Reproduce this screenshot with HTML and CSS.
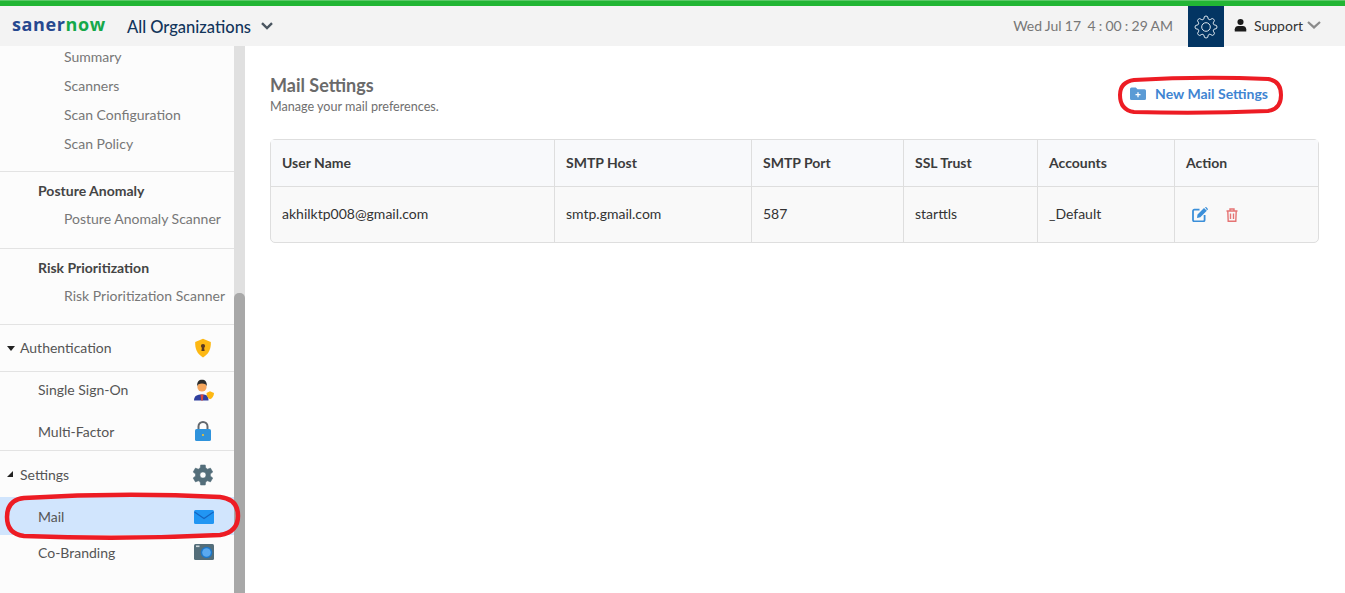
FILE: index.html
```html
<!DOCTYPE html>
<html lang="en">
<head>
<meta charset="utf-8">
<title>Mail Settings</title>
<link rel="stylesheet" href="styles.css">
</head>
<body>
<div class="topline"></div>
<header class="header">
  <div class="logo">saner<span class="logo-now">now</span></div>
  <div class="org">All Organizations</div>
  <svg class="org-chev" viewBox="0 0 12 8"><path d="M1 1.200 6 6l5-4.800" fill="none" stroke="#4a5560" stroke-width="2.400"/></svg>
  <div class="clock">Wed Jul 17&nbsp; 4 : 00 : 29 AM</div>
  <div class="gear-box">
    <svg viewBox="0 0 24 24" width="24" height="24" fill="none" stroke="#dfe8ef" stroke-width="1" stroke-linejoin="round"><circle cx="12" cy="12" r="4.300"/><path d="M19.4 15a1.65 1.65 0 0 0 .33 1.82l.06.06a2 2 0 0 1 0 2.83 2 2 0 0 1-2.83 0l-.06-.06a1.65 1.65 0 0 0-1.82-.33 1.65 1.65 0 0 0-1 1.51V21a2 2 0 0 1-2 2 2 2 0 0 1-2-2v-.09A1.65 1.65 0 0 0 9 19.4a1.65 1.65 0 0 0-1.82.33l-.06.06a2 2 0 0 1-2.83 0 2 2 0 0 1 0-2.83l.06-.06a1.65 1.65 0 0 0 .33-1.82 1.65 1.65 0 0 0-1.51-1H3a2 2 0 0 1-2-2 2 2 0 0 1 2-2h.09A1.65 1.65 0 0 0 4.6 9a1.65 1.65 0 0 0-.33-1.82l-.06-.06a2 2 0 0 1 0-2.83 2 2 0 0 1 2.83 0l.06.06a1.65 1.65 0 0 0 1.82.33H9a1.65 1.65 0 0 0 1-1.51V3a2 2 0 0 1 2-2 2 2 0 0 1 2 2v.09a1.65 1.65 0 0 0 1 1.51 1.65 1.65 0 0 0 1.82-.33l.06-.06a2 2 0 0 1 2.83 0 2 2 0 0 1 0 2.83l-.06.06a1.65 1.65 0 0 0-.33 1.82V9a1.65 1.65 0 0 0 1.51 1H21a2 2 0 0 1 2 2 2 2 0 0 1-2 2h-.09a1.65 1.65 0 0 0-1.51 1z"/></svg>
  </div>
  <div class="user">
    <svg viewBox="0 0 14 14" width="13" height="14"><circle cx="7" cy="3.800" r="3.300" fill="#1b1b1b"/><path d="M.8 14v-2.400C.8 9.200 2.800 8 4.400 8h5.200c1.600 0 3.600 1.200 3.600 3.600V14z" fill="#1b1b1b"/></svg>
    <span class="user-name">Support</span>
    <svg class="user-chev" viewBox="0 0 14 8"><path d="M1 1l6 5.400L13 1" fill="none" stroke="#8b8b8b" stroke-width="2.200"/></svg>
  </div>
</header>

<div class="body-row">
  <aside class="side">
    <nav class="side-nav">
      <div class="group first">
        <div class="sub">Summary</div>
        <div class="sub">Scanners</div>
        <div class="sub">Scan Configuration</div>
        <div class="sub">Scan Policy</div>
      </div>
      <div class="group">
        <div class="grp-title">Posture Anomaly</div>
        <div class="sub">Posture Anomaly Scanner</div>
      </div>
      <div class="group group-risk">
        <div class="grp-title">Risk Prioritization</div>
        <div class="sub">Risk Prioritization Scanner</div>
      </div>
      <div class="sec sec-auth">
        <span class="caret"></span><span class="sec-label">Authentication</span>
        <svg class="ico ico-narrow" viewBox="0 0 18 20" width="18" height="20"><path d="M9 .8 16.800 4c.3 7-2 12-7.800 15.400C3.200 16 .9 11 1.200 4z" fill="#fdb813"/><circle cx="9" cy="8" r="2.100" fill="#5b3a21"/><path d="M8 9h2l.6 4H7.400z" fill="#5b3a21"/></svg>
      </div>
      <div class="item item-sso">
        <span>Single Sign-On</span>
        <svg class="ico" viewBox="0 0 20 22" width="20" height="22"><path d="M0 21.500c0-4.500 3-6 8-6s6.500 1.500 6.500 6z" fill="#2f3f9e"/><path d="M6.500 15.500h3l-.7 6H7.200z" fill="#d9483b"/><circle cx="8" cy="8" r="4.600" fill="#f6a65c"/><path d="M3.200 7.500C2.800 2.500 5 .8 8 .8s5.200 1.700 4.800 6.700c-.6-2.300-1.800-3-4.800-3s-4.200.7-4.800 3z" fill="#2c2c2c"/><path d="M12.500 14l3.500-1.800 4 1.800c0 3.300-2 5.500-4 6.200-1.600-.7-3.500-2.500-3.500-6.200z" fill="#fdb813"/></svg>
      </div>
      <div class="item item-mfa">
        <span>Multi-Factor</span>
        <svg class="ico ico-narrow" viewBox="0 0 18 20" width="18" height="20"><path d="M4.500 9V5.500a4.500 4.500 0 0 1 9 0V9" fill="none" stroke="#62686e" stroke-width="2"/><rect x="1" y="8" width="16" height="12" rx="1.600" fill="#2f93dc"/><circle cx="9" cy="14" r="1.100" fill="#f2c230"/></svg>
      </div>
      <div class="sec sec-settings">
        <span class="caret caret-open"></span><span class="sec-label">Settings</span>
        <svg class="ico" viewBox="3 2 19.500 20" width="22" height="22"><path fill="#546e7a" stroke="#546e7a" stroke-width=".5" d="M19.400 13a7.500 7.500 0 0 0 0-2l2.200-1.700-2.100-3.600-2.600 1a7.500 7.500 0 0 0-1.700-1L14.800 2.900h-4.200l-.4 2.800a7.500 7.500 0 0 0-1.700 1l-2.600-1-2.100 3.600L6 11a7.500 7.500 0 0 0 0 2l-2.200 1.700 2.100 3.600 2.600-1a7.500 7.500 0 0 0 1.700 1l.4 2.800h4.200l.4-2.800a7.500 7.500 0 0 0 1.700-1l2.600 1 2.100-3.600zM12.700 14.800a2.800 2.800 0 1 1 0-5.600 2.800 2.800 0 0 1 0 5.600z"/></svg>
      </div>
      <div class="item item-active">
        <span>Mail</span>
        <svg class="ico" viewBox="0 0 20 14" width="20" height="14"><rect width="20" height="14" rx="1.500" fill="#2196f3"/><path d="M.5 2 10 8.500 19.500 2" fill="none" stroke="#1565c0" stroke-width="1.200"/></svg>
      </div>
      <div class="item item-brand">
        <span>Co-Branding</span>
        <svg class="ico" viewBox="0 0 20 16" width="20" height="16"><rect width="20" height="16" rx="1.500" fill="#546e7a"/><rect x="2" y="1.500" width="3.500" height="1.600" fill="#cfd8dc"/><circle cx="12.500" cy="8.500" r="5.800" fill="#1e78c8"/><circle cx="12.500" cy="8.500" r="4.300" fill="#5aa9f0"/></svg>
      </div>
    </nav>
    <div class="scrollbar"><div class="thumb"></div></div>
  </aside>

  <main class="main">
    <div class="page-head">
      <div>
        <h1 class="page-title">Mail Settings</h1>
        <p class="page-sub">Manage your mail preferences.</p>
      </div>
      <a class="new-btn">
        <svg viewBox="0 0 16 13" width="16" height="13"><path d="M0 2a1.500 1.500 0 0 1 1.500-1.500h4.300L7.500 2.300h7A1.500 1.500 0 0 1 16 3.800v7.700A1.500 1.500 0 0 1 14.500 13h-13A1.500 1.500 0 0 1 0 11.500z" fill="#5b9bd5"/><path d="M8 5.200v5M5.500 7.700h5" stroke="#fff" stroke-width="1.300"/></svg>
        <span>New Mail Settings</span>
      </a>
    </div>
    <table class="tbl">
      <colgroup>
        <col class="c1"><col class="c2"><col class="c3"><col class="c4"><col class="c5"><col>
      </colgroup>
      <thead>
        <tr><th>User Name</th><th>SMTP Host</th><th>SMTP Port</th><th>SSL Trust</th><th>Accounts</th><th>Action</th></tr>
      </thead>
      <tbody>
        <tr>
          <td>akhilktp008@gmail.com</td><td>smtp.gmail.com</td><td>587</td><td>starttls</td><td>_Default</td>
          <td class="actions">
            <svg viewBox="0 0 16 15" width="16" height="15"><path d="M7.500 2.700H2.300A1.300 1.300 0 0 0 1 4v9a1.300 1.300 0 0 0 1.300 1.300h9A1.300 1.300 0 0 0 12.600 13V8" fill="none" stroke="#3b8fd9" stroke-width="1.800"/><path d="M5.500 7.500 12 1l2.800 2.800-6.500 6.500-3.300.6zM13 0l.8-.3 2.200 2.200-.3.800-.7.500L13 .1z" fill="#3b8fd9"/></svg>
            <svg viewBox="0 0 12 14" width="12" height="14"><path d="M.5 3h11M4 3V1h4v2M1.800 3l.4 10.300h7.600L10.200 3M4.500 5.500v5.500M7.500 5.500v5.500" fill="none" stroke="#e57373" stroke-width="1.400"/></svg>
          </td>
        </tr>
      </tbody>
    </table>
  </main>
</div>

<svg class="mark mark-new" viewBox="0 0 170 44" width="170" height="44"><path d="M18 7Q85 3 152 6 165 8 165 22 165 36 152 38 85 41 18 39 4 37 4 22 4 9 18 7Z" fill="none" stroke="#ed1c24" stroke-width="4"/></svg>
<svg class="mark mark-mail" viewBox="0 0 240 50" width="240" height="50"><path d="M20 7Q118 1 216 6 234 8 234 25 234 41 216 44 118 49 20 45 3 43 3 26 3 9 20 7Z" fill="none" stroke="#ed1c24" stroke-width="4.500"/></svg>
</body>
</html>
```

FILE: styles.css
```css
* { box-sizing: border-box; }
html, body { margin: 0; padding: 0; height: 100%; }
body {
  position: relative;
  height: 593px;
  overflow: hidden;
  background: #fff;
  font-family: Lato, "Liberation Sans", sans-serif;
  font-size: 14px;
  color: #333;
  display: flex;
  flex-direction: column;
}
.topline { height: 6px; flex: none; background: #22b534; border-top: 1px solid #5cc868; }
.header {
  height: 40px;
  flex: none;
  display: flex;
  align-items: center;
  background: #f3f3f3;
  padding-left: 12px;
}
.logo { font-family: "Open Sans", "DejaVu Sans", sans-serif; font-weight: 700; font-size: 18px; letter-spacing: .6px; color: #26488f; width: 115px; margin-top: -4px; }
.logo-now { color: #15a84a; }
.org { font-size: 16.500px; font-weight: 500; color: #12355b; margin-top: 1px; }
.org-chev { width: 12px; height: 8px; margin-left: 10px; }
.clock { margin-left: auto; font-size: 14px; word-spacing: -.4px; color: #777; margin-right: 15px; margin-bottom: 2px; }
.gear-box { width: 36px; height: 41px; align-self: flex-start; background: #033563; display: flex; align-items: center; justify-content: center; }
.user { width: 121px; display: flex; align-items: center; padding-left: 10px; margin-bottom: 2px; }
.user-name { font-size: 14px; color: #333; margin-left: 7px; }
.user-chev { width: 14px; height: 8px; margin-left: 4px; }

.body-row { flex: 1; display: flex; min-height: 0; }
.side { width: 245px; flex: none; display: flex; background: #fcfcfc; overflow: hidden; }
.side-nav { width: 234px; flex: none; }
.scrollbar { width: 11px; background: #e0e0e0; display: flex; flex-direction: column; justify-content: flex-end; }
.thumb { height: 300px; background: #a8a8a8; border-radius: 5px 5px 0 0; }

.group { border-bottom: 1px solid #e3e3e3; height: 77px; padding-top: 5px; }
.group.first { height: 130px; padding-top: 0; margin-top: -4px; }
.group-risk { height: 76px; }
.sub { height: 29px; line-height: 29px; padding-left: 64px; font-size: 14px; color: #777; white-space: nowrap; }
.grp-title { height: 28px; line-height: 28px; padding-left: 38px; font-size: 14px; font-weight: 700; color: #444; white-space: nowrap; }
.group .grp-title + .sub { height: 28px; line-height: 28px; }
.sec { height: 47px; display: flex; align-items: center; padding-left: 7px; border-bottom: 1px solid #e3e3e3; font-size: 14px; color: #555; }
.sec-auth { padding-bottom: 1px; }
.sec-settings { border-bottom: 0; height: 46px; padding-top: 1px; }
.sec-label { margin-left: 5px; }
.caret { width: 0; height: 0; border-left: 4.500px solid transparent; border-right: 4.500px solid transparent; border-top: 5px solid #222; margin-top: 1px; }
.caret-open { border-left: 6px solid transparent; border-right: 0; border-top: 0; border-bottom: 6px solid #222; margin-right: 2px; margin-top: -1px; }
.ico { margin-left: auto; margin-right: 20px; flex: none; }
.ico-narrow { margin-right: 22px; }
.item { display: flex; align-items: center; height: 38px; padding-left: 38px; font-size: 14px; color: #555; }
.item-sso { height: 36px; padding-bottom: 2px; }
.item-mfa { height: 43px; padding-top: 4px; border-bottom: 1px solid #e3e3e3; }
.item-active { background: #d1e5fd; padding-top: 1px; }
.item-brand { height: 36px; padding-bottom: 2px; }
.item-sso .ico { margin-top: 2px; }

.main { flex: 1; min-width: 0; padding: 28px 26px 0 25px; }
.page-head { display: flex; justify-content: space-between; align-items: flex-start; height: 65px; }
.page-title { margin: 0; font-size: 18px; font-weight: 700; line-height: 22px; color: #6a6a6a; }
.page-sub { margin: 3px 0 0; font-size: 12.600px; line-height: 16px; color: #6f6f6f; }
.new-btn { display: flex; align-items: center; gap: 9px; margin: 11px 51px 0 0; color: #3f85d2; font-size: 14px; font-weight: 700; }

.tbl { width: 100%; table-layout: fixed; border-collapse: separate; border-spacing: 0; border: 1px solid #dedede; border-radius: 5px; font-size: 14px; color: #333; background: #f9f9f9; }
.c1 { width: 284px; }
.c2 { width: 197px; }
.c3 { width: 152px; }
.c4 { width: 134px; }
.c5 { width: 137px; }
.tbl th { height: 47px; padding: 0 11px 2px; text-align: left; font-weight: 700; color: #3c3c3c; background: #f8f9fb; border-bottom: 1px solid #dedede; border-right: 1px solid #dedede; }
.tbl td { height: 55px; padding: 0 11px 2px; border-right: 1px solid #dedede; }
.tbl th:last-child, .tbl td:last-child { border-right: 0; }
.actions svg { vertical-align: middle; margin-right: 14px; }
.actions svg:first-child { margin-left: 6px; }

.mark { position: absolute; pointer-events: none; }
.mark-new { left: 1116px; top: 73px; }
.mark-mail { left: 4px; top: 491px; }
```
